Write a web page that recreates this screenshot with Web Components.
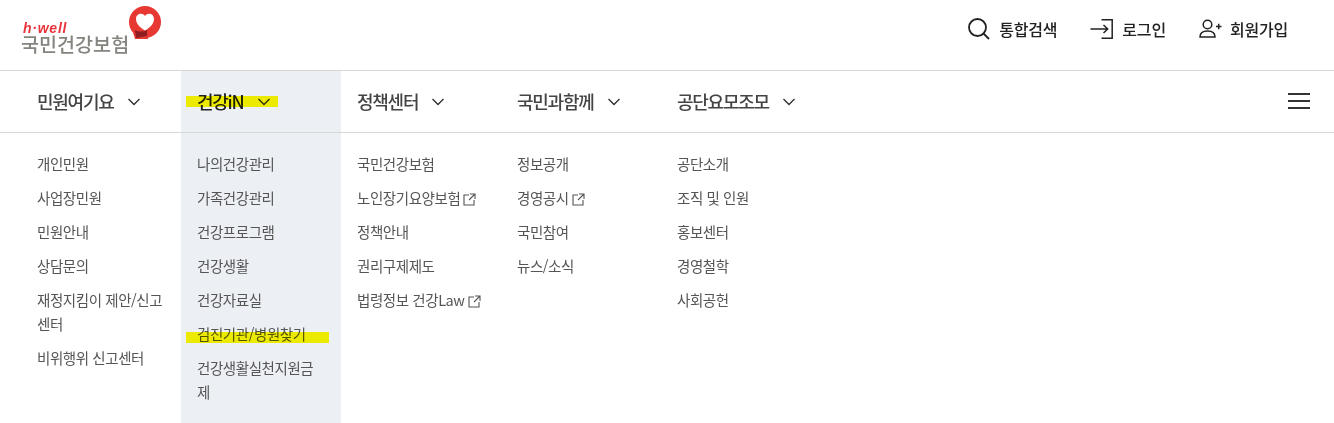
<!DOCTYPE html>
<html lang="ko"><head><meta charset="utf-8"><style>
html,body{margin:0;padding:0;background:#fff}
body{font-family:"Noto Sans CJK KR","Noto Sans",sans-serif;width:1334px;height:423px;overflow:hidden}
</style></head><body>
<site-menu></site-menu>
<template id="t-logo"><style>
:host{display:block;position:relative;width:150px;height:56px;margin:0 0 0 21px;align-self:flex-start}
.h{position:absolute;left:2px;top:22px;font:italic 700 14px/12px "Liberation Sans",sans-serif;color:#e8343a;letter-spacing:.75px}
.k{position:absolute;left:0;top:34px;font-size:19.600px;line-height:20px;font-weight:500;color:#85857f;white-space:nowrap}
svg{position:absolute;left:106px;top:5px}
</style><span class="h">h·well</span><span class="k">국민건강보험</span>
<svg width="36" height="36" viewBox="0 0 36 36"><circle cx="18" cy="17" r="16" fill="#e73833"/><path d="M5 24L8 34H21V28z" fill="#e73833"/><path d="M8 25Q14 28 20 25V31L9 33z" fill="#8f1d22"/><path d="M18 25.500C12 22 9 18 9 14c0-5.500 6.500-7 9-3 2.500-4 9-2.500 9 3 0 4-3 8-9 11.500z" fill="#fff"/></svg></template>

<template id="t-util"><style>
:host{display:flex;align-items:center;color:#222;font-size:16px;font-weight:500;letter-spacing:-.2px;line-height:22px}
::slotted(svg){display:block;flex:none}
span{display:block}
</style><slot name="i"></slot><span><slot></slot></span></template>

<template id="t-top"><style>
:host{display:flex;align-items:center;height:61px;box-sizing:border-box;width:160px;padding-left:16px;color:#444;font-size:18px;font-weight:500;letter-spacing:-1.25px;flex:none}
:host([active]){background:#eceff4;color:#222}
svg{display:block;margin-left:var(--gap,14px);margin-top:1px}
</style><span style="margin-top:-1px"><slot></slot></span><svg width="12" height="8" viewBox="0 0 12 8" fill="none" stroke="#333" stroke-width="1.400"><path d="M.5 1l5.500 5.500L11.500 1"/></svg></template>

<template id="t-col"><style>
:host{display:flex;flex-direction:column;gap:10px;box-sizing:border-box;width:160px;padding:19px 16px 0;flex:none}
:host([active]){background:#eceff4}
</style><slot></slot></template>

<template id="t-item"><style>
:host{display:block;color:#555;font-size:14.500px;line-height:24px;letter-spacing:-.42px;word-break:break-all}
svg{display:inline-block;vertical-align:-2px;margin-left:3px}
</style><slot></slot></template>

<template id="t-menu"><style>
:host{display:block;position:relative;width:1334px;height:423px;background:#fff}
.head{display:flex;align-items:center;justify-content:space-between;height:71px;box-sizing:border-box;border-bottom:1px solid #d7d7d7}
.utils{display:flex;align-items:center;gap:33px;padding-right:46px;margin-top:-12px}
.nav{display:flex;align-items:stretch;height:62px;box-sizing:border-box;border-bottom:1px solid #d7d7d7;padding-left:21px;position:relative}
.burger{position:absolute;right:24px;top:22px;display:flex;flex-direction:column;gap:5px;width:22px}
.burger i{display:block;height:2px;background:#333}
.cols{display:flex;padding-left:21px;height:290px}
.mark{position:absolute;background:#fffa00;mix-blend-mode:multiply}
</style>
<div class="head"><h-logo></h-logo><div class="utils">
<util-link><svg slot="i" width="22" height="22" viewBox="0 0 22 22" fill="none" stroke="#222" stroke-width="1.800" style="margin-right:9px"><circle cx="9.500" cy="9.500" r="8.500"/><path d="M15.500 15.500l5.500 5.500"/></svg>통합검색</util-link>
<util-link><svg slot="i" width="23" height="20" viewBox="0 0 23 20" fill="none" stroke="#222" stroke-width="1.500" style="margin-right:9px"><path d="M11.500 .8h10.700v18.400H11.500"/><path d="M.5 10h17M13.500 6l4.200 4-4.200 4"/></svg>로그인</util-link>
<util-link><svg slot="i" width="23" height="20" viewBox="0 0 23 20" fill="none" stroke="#222" stroke-width="1.500" style="margin:0 8px 0 0"><circle cx="8.500" cy="5.500" r="4.300"/><path d="M1 18c0-4 3-6 7.500-6s7.500 2 7.500 6z"/><path d="M17 7.500h5.500M19.700 4.700v5.600"/></svg>회원가입</util-link>
</div></div>
<div class="nav">
<top-item>민원여기요</top-item>
<top-item active>건강iN</top-item>
<top-item>정책센터</top-item>
<top-item>국민과함께</top-item>
<top-item>공단요모조모</top-item>
<div class="burger"><i></i><i></i><i></i></div>
</div>
<div class="cols">
<menu-col><menu-item>개인민원</menu-item><menu-item>사업장민원</menu-item><menu-item>민원안내</menu-item><menu-item>상담문의</menu-item><menu-item>재정지킴이 제안/신고센터</menu-item><menu-item>비위행위 신고센터</menu-item></menu-col>
<menu-col active><menu-item>나의건강관리</menu-item><menu-item>가족건강관리</menu-item><menu-item>건강프로그램</menu-item><menu-item>건강생활</menu-item><menu-item>건강자료실</menu-item><menu-item>검진기관/병원찾기</menu-item><menu-item>건강생활실천지원금제</menu-item></menu-col>
<menu-col><menu-item>국민건강보험</menu-item><menu-item ext>노인장기요양보험</menu-item><menu-item>정책안내</menu-item><menu-item>권리구제제도</menu-item><menu-item ext>법령정보 건강Law</menu-item></menu-col>
<menu-col><menu-item>정보공개</menu-item><menu-item ext>경영공시</menu-item><menu-item>국민참여</menu-item><menu-item>뉴스/소식</menu-item></menu-col>
<menu-col><menu-item>공단소개</menu-item><menu-item>조직 및 인원</menu-item><menu-item>홍보센터</menu-item><menu-item>경영철학</menu-item><menu-item>사회공헌</menu-item></menu-col>
</div>
<div class="mark" style="left:186px;top:96px;width:92px;height:11px"></div>
<div class="mark" style="left:186px;top:332px;width:143px;height:11px"></div>
</template>
<script>
function def(name,tid,after){customElements.define(name,class extends HTMLElement{constructor(){super();const s=this.attachShadow({mode:"open"});s.appendChild(document.getElementById(tid).content.cloneNode(true));if(after)after(this,s)}})}
def("h-logo","t-logo");
def("util-link","t-util");
def("top-item","t-top");
def("menu-col","t-col");
def("menu-item","t-item",(el,s)=>{if(el.hasAttribute("ext")){s.innerHTML+='<svg width="13" height="13" viewBox="0 0 13 13" fill="none" stroke="#555" stroke-width="1.100"><path d="M6 2H1v10h10V7"/><path d="M7 1h5v5M12 1L6 7"/></svg>'}});
def("site-menu","t-menu");
</script>
</body></html>
